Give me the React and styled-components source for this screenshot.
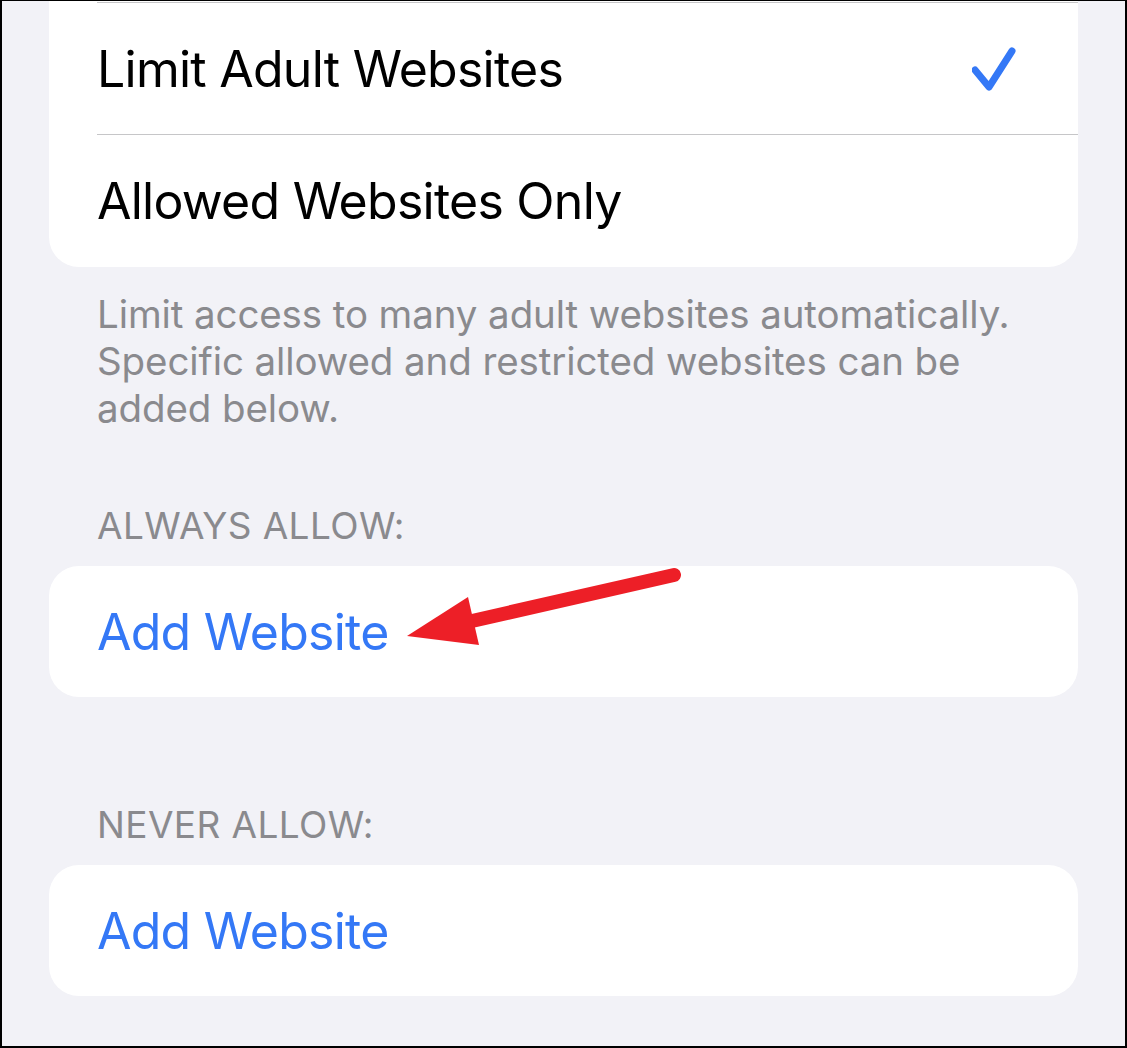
import React from "react";
import styled, { createGlobalStyle } from "styled-components";

const Global = createGlobalStyle`
  html, body { margin: 0; padding: 0; background: #f2f2f7; }
  * { box-sizing: border-box; }
`;

const Frame = styled.div`
  position: relative;
  width: 1127px;
  height: 1048px;
  overflow: hidden;
  background: #f2f2f7;
  border: 2px solid #000;
  border-top-width: 1px;
  padding: 0 47px;
  font-family: Inter, "Liberation Sans", sans-serif;
`;

const Card = styled.div`
  background: #fff;
  border-radius: ${(p) => (p.$cut ? "0 0 30px 30px" : "30px")};
  padding-top: ${(p) => (p.$cut ? "1px" : "0")};
  margin-top: ${(p) => p.$mt || 0}px;
`;

const Separator = styled.div`
  height: 1px;
  margin-left: 48px;
  background: #c6c6c8;
`;

const Row = styled.div`
  height: ${(p) => p.$h || 131}px;
  display: flex;
  align-items: center;
  justify-content: space-between;
  padding: 0 48px 0 48px;
  font-size: 50px;
  letter-spacing: -0.75px;
  color: ${(p) => (p.$link ? "#3478f6" : "#000")};
`;

const Check = styled.svg`
  width: 50px;
  height: 50px;
  margin-right: 8px;
  margin-top: 6px;
  flex: none;
`;

const Footer = styled.div`
  margin-top: ${(p) => p.$mt || 0}px;
  padding: 0 48px;
  font-size: 38.5px;
  line-height: 47px;
  letter-spacing: -0.1px;
  color: #8a8a8e;
`;

const Header = styled.div`
  margin-top: ${(p) => p.$mt || 0}px;
  padding: 0 48px;
  font-size: 37px;
  line-height: 47px;
  letter-spacing: 0.4px;
  color: #8a8a8e;
  text-transform: uppercase;
`;

const Overlay = styled.svg`
  position: absolute;
  left: -2px;
  top: -1px;
  width: 1127px;
  height: 1048px;
  pointer-events: none;
`;

export default function App() {
  return (
    <>
      <Global />
      <Frame>
        <Card $cut>
          <Separator />
          <Row>
            <span>Limit Adult Websites</span>
            <Check viewBox="0 0 50 50">
              <path
                d="M3 23 L17 40 L40 4"
                fill="none"
                stroke="#3478f6"
                strokeWidth="7"
                strokeLinecap="round"
                strokeLinejoin="round"
              />
            </Check>
          </Row>
          <Separator />
          <Row $h={132}>
            <span>Allowed Websites Only</span>
          </Row>
        </Card>
        <Footer $mt={24}>
          Limit access to many adult websites automatically. Specific allowed
          and restricted websites can be added below.
        </Footer>
        <Header $mt={70}>Always Allow:</Header>
        <Card $mt={17}>
          <Row $link>Add Website</Row>
        </Card>
        <Header $mt={104}>Never Allow:</Header>
        <Card $mt={17}>
          <Row $link>Add Website</Row>
        </Card>
        <Overlay viewBox="0 0 1127 1048">
          <line
            x1="674"
            y1="575"
            x2="472"
            y2="621"
            stroke="#ed1f27"
            strokeWidth="14"
            strokeLinecap="round"
          />
          <polygon points="407,636 468,597 479,645" fill="#ed1f27" />
        </Overlay>
      </Frame>
    </>
  );
}
